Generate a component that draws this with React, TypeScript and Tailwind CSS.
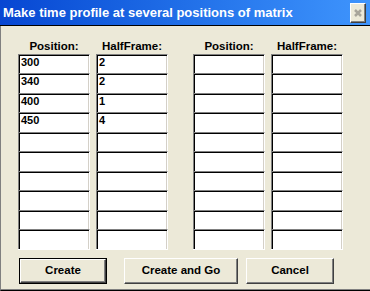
import React from 'react';

// Dialog: "Make time profile at several positions of matrix"
const ROWS = 10;

const leftPositions = ['300', '340', '400', '450'];
const leftHalfFrames = ['2', '2', '1', '4'];

const rowHeight = (i: number) => (i % 2 === 0 ? 'h-[19px]' : 'h-[20px]');

const Cell: React.FC<{ value?: string; index: number }> = ({ value, index }) => (
  <div
    className={`${rowHeight(index)} bg-white border-t border-l border-r border-t-[#808080] border-l-[#808080] border-r-white shadow-[inset_1px_1px_0_#000,inset_-1px_0_0_#d4d0c8] pl-[2px] pt-[1px] text-[11px] leading-[13px] font-bold text-black`}
  >
    {value}
  </div>
);

const Column: React.FC<{ label: string; values?: string[]; className?: string }> = ({ label, values = [], className }) => (
  <div className={`flex w-[72px] flex-col ${className ?? ''}`}>
    <div className="h-[14px] text-center text-[11.5px] leading-[13px] font-bold text-black">{label}</div>
    <div className="flex flex-col border-b border-white">
      {Array.from({ length: ROWS }).map((_, i) => (
        <Cell key={i} index={i} value={values[i]} />
      ))}
    </div>
  </div>
);

const Button: React.FC<{ label: string; width: string; isDefault?: boolean; className?: string }> = ({
  label,
  width,
  isDefault,
  className,
}) =>
  isDefault ? (
    <div className={`${width} h-[26px] border border-black ${className ?? ''}`}>
      <div className="flex h-full items-center justify-center border-t border-l border-white border-r border-b border-r-[#404040] border-b-[#404040] shadow-[inset_-1px_-1px_0_#808080] text-[11.5px] font-bold text-black">
        {label}
      </div>
    </div>
  ) : (
    <div
      className={`${width} flex h-[26px] items-center justify-center border-t border-l border-white border-r border-b border-r-[#404040] border-b-[#404040] shadow-[inset_-1px_-1px_0_#808080] text-[11.5px] font-bold text-black ${className ?? ''}`}
    >
      {label}
    </div>
  );

export default function App() {
  return (
    <div className="flex h-[291px] w-[370px] flex-col overflow-hidden bg-[#ece9d8] font-['Liberation_Sans',Arial,sans-serif]">
      {/* title bar */}
      <div className="flex h-[26px] shrink-0 items-start border-b border-black bg-gradient-to-r from-[#0846d2] to-[#3f95fd]">
        <div className="flex h-[25px] flex-1 items-center pl-[3px] text-[13px] leading-[15px] font-bold text-white">
          Make time profile at several positions of matrix
        </div>
        <div className="mt-[3px] mr-[4px] h-[20px] w-[16px] border-t border-l border-white border-r border-b border-r-[#404040] border-b-[#404040] bg-[#ece9d8] shadow-[inset_-1px_-1px_0_#808080]">
          <svg width="14" height="18" viewBox="0 0 14 18">
            <path d="M4 6 L10 12 M10 6 L4 12" stroke="#a8a59b" strokeWidth="2.5" />
          </svg>
        </div>
      </div>

      {/* body */}
      <div className="flex flex-1 flex-col border-l border-l-[#808080] border-b border-b-black pt-[14px] pl-[17px] shadow-[inset_0_-1px_0_#808080]">
        <div className="flex">
          <Column label="Position:" values={leftPositions} />
          <Column label="HalfFrame:" values={leftHalfFrames} className="ml-[6px]" />
          <Column label="Position:" className="ml-[25px]" />
          <Column label="HalfFrame:" className="ml-[6px]" />
        </div>

        <div className="mt-[8px] flex pl-[1px]">
          <Button label="Create" width="w-[88px]" isDefault />
          <Button label="Create and Go" width="w-[114px]" className="ml-[17px]" />
          <Button label="Cancel" width="w-[88px]" className="ml-[8px]" />
        </div>
      </div>
    </div>
  );
}
